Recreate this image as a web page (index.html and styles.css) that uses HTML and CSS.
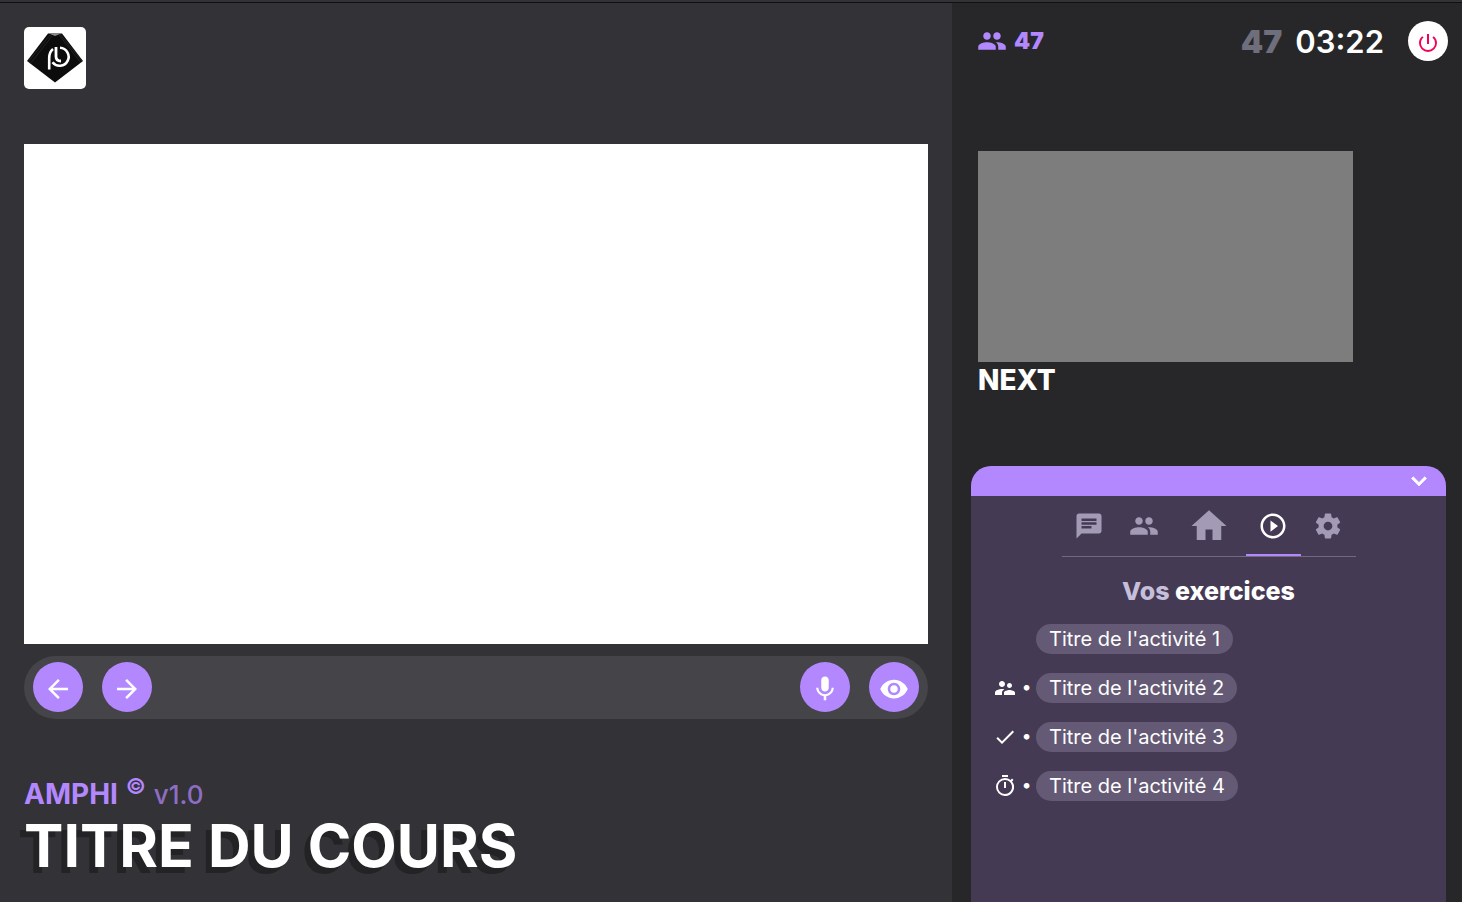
FILE: index.html
```html
<!DOCTYPE html>
<html lang="fr">
<head>
<meta charset="utf-8">
<title>Amphi</title>
<meta name="viewport" content="width=device-width, initial-scale=1">
<link rel="stylesheet" href="styles.css">
</head>
<body>
<div class="app">
  <main class="course">
    <a class="logo" href="#" aria-label="Accueil">
      <svg viewBox="0 0 62 62" width="62" height="62">
        <path d="M3 34 24 6.500H38L59 34 31 55.500z" fill="#0c0c0c"/>
        <path d="M4 35 26 8M6 37 28 9M35 8 57 36M36 7 58 34" stroke="#3a3a3a" stroke-width=".5"/>
        <path d="M26 7h10l-5 2z" fill="#8a8a8a"/>
        <path d="M25.200 42.500V31q0-6 3.800-9" fill="none" stroke="#fff" stroke-width="2.600"/>
        <path d="M36 20.800a9 9 0 1 1-7.500 14.500" fill="none" stroke="#fff" stroke-width="2.600"/>
        <path d="M32 20v9.500q0 4.500 5 4.500" fill="none" stroke="#fff" stroke-width="2.800"/>
      </svg>
    </a>
    <section class="stage" aria-label="Présentation"></section>
    <div class="controls">
      <button class="round" aria-label="Précédent"><svg class="icon" viewBox="0 0 24 24"><path d="M20 11H7.830l5.590-5.590L12 4l-8 8 8 8 1.410-1.410L7.830 13H20z"/></svg></button>
      <button class="round" aria-label="Suivant"><svg class="icon" viewBox="0 0 24 24"><path d="m12 4-1.410 1.410L16.170 11H4v2h12.170l-5.580 5.590L12 20l8-8z"/></svg></button>
      <span class="spacer"></span>
      <button class="round" aria-label="Micro"><svg class="icon" viewBox="0 0 24 24"><path d="M12 14c1.660 0 2.990-1.340 2.990-3L15 5c0-1.660-1.340-3-3-3S9 3.340 9 5v6c0 1.660 1.340 3 3 3zm5.300-3c0 3-2.540 5.100-5.300 5.100S6.700 14 6.700 11H5c0 3.410 2.720 6.230 6 6.720V21h2v-3.280c3.280-.48 6-3.300 6-6.720h-1.700z"/></svg></button>
      <button class="round" aria-label="Visibilité"><svg class="icon" viewBox="0 0 24 24"><path d="M12 4.500C7 4.500 2.730 7.610 1 12c1.730 4.390 6 7.500 11 7.500s9.270-3.110 11-7.500c-1.730-4.390-6-7.500-11-7.500zM12 17c-2.760 0-5-2.240-5-5s2.240-5 5-5 5 2.240 5 5-2.240 5-5 5zm0-8c-1.660 0-3 1.340-3 3s1.340 3 3 3 3-1.340 3-3-1.340-3-3-3z"/></svg></button>
    </div>
    <header class="heading">
      <p class="brand"><strong>AMPHI</strong> <sup>©</sup> <span class="version">v1.0</span></p>
      <h1>TITRE DU COURS</h1>
    </header>
  </main>

  <aside class="side">
    <div class="status">
      <svg class="icon" viewBox="0 0 24 24"><path d="M16 11c1.660 0 2.990-1.340 2.990-3S17.660 5 16 5s-3 1.340-3 3 1.340 3 3 3zm-8 0c1.660 0 2.990-1.340 2.990-3S9.660 5 8 5 5 6.340 5 8s1.340 3 3 3zm0 2c-2.330 0-7 1.170-7 3.500V19h14v-2.500c0-2.330-4.670-3.500-7-3.500zm8 0c-.29 0-.62.02-.97.05 1.160.84 1.970 1.970 1.970 3.450V19h6v-2.500c0-2.330-4.670-3.500-7-3.500z"/></svg>
      <span class="people">47</span>
      <span class="spacer"></span>
      <span class="slide">47</span>
      <time class="clock">03:22</time>
      <button class="power" aria-label="Quitter"><svg class="icon small" viewBox="0 0 24 24"><path d="M13 3h-2v10h2V3zm4.830 2.170-1.420 1.420A6.920 6.920 0 0 1 19 12c0 3.870-3.130 7-7 7s-7-3.130-7-7c0-2.190 1.010-4.140 2.580-5.420L6.170 5.170A8.932 8.932 0 0 0 3 12a9 9 0 0 0 18 0c0-2.740-1.230-5.180-3.170-6.830z"/></svg></button>
    </div>
    <section class="next">
      <div class="preview"></div>
      <h2>NEXT</h2>
    </section>
    <section class="drawer">
      <button class="drawer-bar" aria-label="Réduire"><svg class="icon" viewBox="0 0 24 24"><path d="M16.590 8.590 12 13.170 7.410 8.590 6 10l6 6 6-6z" stroke="#fff" stroke-width=".5"/></svg></button>
      <nav class="tabs">
        <button class="tab" aria-label="Messages"><svg class="icon" viewBox="0 0 24 24"><path d="M20 2H4c-1.100 0-1.990.9-1.990 2L2 22l4-4h14c1.100 0 2-.9 2-2V4c0-1.100-.9-2-2-2zM6 9h12v2H6V9zm8 5H6v-2h8v2zm4-6H6V6h12v2z"/></svg></button>
        <button class="tab" aria-label="Participants"><svg class="icon" viewBox="0 0 24 24"><path d="M16 11c1.660 0 2.990-1.340 2.990-3S17.660 5 16 5s-3 1.340-3 3 1.340 3 3 3zm-8 0c1.660 0 2.990-1.340 2.990-3S9.660 5 8 5 5 6.340 5 8s1.340 3 3 3zm0 2c-2.330 0-7 1.170-7 3.500V19h14v-2.500c0-2.330-4.670-3.500-7-3.500zm8 0c-.29 0-.62.02-.97.05 1.160.84 1.970 1.970 1.970 3.450V19h6v-2.500c0-2.330-4.670-3.500-7-3.500z"/></svg></button>
        <button class="tab home" aria-label="Accueil"><svg class="icon" viewBox="0 0 24 24"><path d="M10 20v-6h4v6h5v-8h3L12 3 2 12h3v8z"/></svg></button>
        <button class="tab active" aria-label="Exercices"><svg class="icon" viewBox="0 0 24 24"><path d="m10 16.500 6-4.500-6-4.500v9zM12 2C6.480 2 2 6.480 2 12s4.480 10 10 10 10-4.480 10-10S17.520 2 12 2zm0 18c-4.410 0-8-3.590-8-8s3.590-8 8-8 8 3.590 8 8-3.590 8-8 8z"/></svg></button>
        <button class="tab" aria-label="Réglages"><svg class="icon" viewBox="0 0 24 24"><path d="M19.430 12.980c.04-.32.07-.64.07-.98s-.03-.66-.07-.98l2.110-1.650c.19-.15.24-.42.12-.64l-2-3.460c-.12-.22-.39-.3-.61-.22l-2.490 1c-.52-.4-1.080-.73-1.690-.98l-.38-2.650A.488.488 0 0 0 14 2h-4c-.25 0-.46.18-.49.42l-.38 2.650c-.61.25-1.170.59-1.690.98l-2.490-1c-.23-.09-.49 0-.61.22l-2 3.460c-.13.22-.07.49.12.64l2.110 1.650c-.04.32-.07.65-.07.98s.03.66.07.98l-2.110 1.650c-.19.15-.24.42-.12.64l2 3.460c.12.22.39.3.61.22l2.490-1c.52.4 1.080.73 1.690.98l.38 2.650c.03.24.24.42.49.42h4c.25 0 .46-.18.49-.42l.38-2.650c.61-.25 1.170-.59 1.690-.98l2.490 1c.23.09.49 0 .61-.22l2-3.460c.12-.22.07-.49-.12-.64l-2.110-1.650zM12 15.500c-1.930 0-3.500-1.570-3.500-3.500s1.570-3.500 3.500-3.500 3.500 1.570 3.500 3.500-1.570 3.500-3.500 3.500z"/></svg></button>
      </nav>
      <h3><span>Vos</span> exercices</h3>
      <ul class="activities">
        <li><span class="mark"></span><span class="dot"></span><button class="chip">Titre de l'activité 1</button></li>
        <li><span class="mark"><svg class="icon small" viewBox="0 0 24 24"><path d="M16.500 12c1.380 0 2.490-1.120 2.490-2.500S17.880 7 16.500 7 14 8.120 14 9.500s1.120 2.500 2.500 2.500zM9 11c1.660 0 2.990-1.340 2.990-3S10.660 5 9 5 6 6.340 6 8s1.340 3 3 3zm7.500 3c-1.830 0-5.500.92-5.500 2.750V19h11v-2.250c0-1.830-3.670-2.750-5.500-2.750zM9 13c-2.330 0-7 1.170-7 3.500V19h7v-2.250c0-.85.33-2.340 2.370-3.470C10.500 13.100 9.660 13 9 13z"/></svg></span><span class="dot">•</span><button class="chip">Titre de l'activité 2</button></li>
        <li><span class="mark"><svg class="icon small" viewBox="0 0 24 24"><path d="M9 16.170 4.830 12l-1.420 1.410L9 19 21 7l-1.410-1.410z"/></svg></span><span class="dot">•</span><button class="chip">Titre de l'activité 3</button></li>
        <li><span class="mark"><svg class="icon small" viewBox="0 0 24 24"><path d="M15 1H9v2h6V1zm-4 13h2V8h-2v6zm8.030-6.610 1.420-1.420c-.43-.51-.9-.99-1.410-1.410l-1.420 1.420A8.962 8.962 0 0 0 12 4a9 9 0 0 0 0 18 8.994 8.994 0 0 0 7.030-14.610zM12 20c-3.870 0-7-3.130-7-7s3.130-7 7-7 7 3.130 7 7-3.130 7-7 7z"/></svg></span><span class="dot">•</span><button class="chip">Titre de l'activité 4</button></li>
      </ul>
    </section>
  </aside>
</div>
</body>
</html>
```
FILE: styles.css
```css
* { box-sizing: border-box; margin: 0; padding: 0; }

body {
  background: #333237;
  color: #fff;
  font-family: Inter, "Open Sans", sans-serif;
}

button {
  border: 0;
  background: none;
  color: inherit;
  font: inherit;
  cursor: pointer;
}

.icon { display: block; flex: none; width: 30px; height: 30px; fill: currentColor; }
.icon.small { width: 24px; height: 24px; }
.spacer { flex: 1; }

.app {
  display: grid;
  grid-template-columns: minmax(0, 1fr) 510px;
  min-height: calc(100vh - 2px);
  margin-top: 2px;
  border-top: 1px solid #111113;
}

/* Course column */
.course { display: flex; flex-direction: column; padding: 24px 24px 0; }

.logo {
  width: 62px;
  height: 62px;
  border-radius: 5px;
  background: #fff;
  overflow: hidden;
}

.stage { height: 500px; margin-top: 55px; background: #fff; }

.controls {
  display: flex;
  gap: 19px;
  margin-top: 12px;
  padding: 6px 9px 7px;
  border-radius: 32px;
  background: #454449;
}

.round {
  display: grid;
  place-items: center;
  width: 50px;
  height: 50px;
  padding-top: 4px;
  border-radius: 50%;
  background: #b388ff;
}

.heading { margin-top: 57px; }

.brand {
  color: #b388ff;
  font-size: 28px;
  line-height: 36px;
  white-space: nowrap;
}

.brand sup { font-size: 22px; font-weight: 600; line-height: 0; }
.version { font-size: 26px; font-weight: 500; opacity: .7; }

h1 {
  font-size: 59px;
  font-weight: 700;
  line-height: 66px;
  text-shadow: -6px 6px 0 #232325;
  white-space: nowrap;
}

/* Side column */
.side {
  display: flex;
  flex-direction: column;
  padding: 18px 14px 0 19px;
  background: #272729;
}

.status { display: flex; align-items: center; padding-left: 6px; }
.status > .icon { color: #b388ff; }
.people { margin-left: 7px; color: #b388ff; font-size: 23px; font-weight: 900; }
.slide { color: #6f6e7c; font-size: 32px; font-weight: 900; }
.clock { margin: 0 24px 0 13px; font-size: 31px; font-weight: 600; }

.power {
  display: grid;
  place-items: center;
  width: 40px;
  height: 40px;
  padding-top: 4px;
  border-radius: 50%;
  background: #fff;
  color: #f50057;
}

.next { margin-top: 90px; padding-left: 7px; }
.preview { width: 375px; height: 211px; background: #7d7d7e; }
h2 { font-size: 28px; font-weight: 800; line-height: 36px; }

.drawer {
  flex: 1;
  margin: 68px 2px 0 0;
  border-radius: 20px 20px 0 0;
  background: #443a54;
  overflow: hidden;
}

.drawer-bar {
  display: flex;
  justify-content: flex-end;
  width: 100%;
  padding-right: 12px;
  background: #b388ff;
}

.tabs {
  display: flex;
  width: max-content;
  margin: 0 auto;
  border-bottom: 1px solid #75697f;
}

.tab {
  display: grid;
  place-items: center;
  width: 55px;
  height: 60px;
  border-bottom: 2px solid transparent;
  padding-top: 2px;
  color: #a39bb5;
}

.tab.home { width: 74px; }
.home .icon { width: 42px; height: 42px; }
.tab.active { border-color: #b388ff; color: #fff; }

h3 {
  margin-top: 16px;
  font-size: 25px;
  font-weight: 800;
  line-height: 36px;
  text-align: center;
}

h3 span { color: #c5bfdc; }

.activities {
  display: grid;
  gap: 19px;
  margin-top: 15px;
  padding-left: 22px;
  list-style: none;
}

.activities li { display: flex; align-items: center; height: 30px; }
.mark { width: 24px; }
.dot { width: 19px; padding-bottom: 4px; font-size: 18px; text-align: center; }

.chip {
  height: 30px;
  padding: 0 13px;
  border-radius: 15px;
  background: #645a75;
  font-size: 20px;
  font-weight: 400;
  line-height: 30px;
}
```
